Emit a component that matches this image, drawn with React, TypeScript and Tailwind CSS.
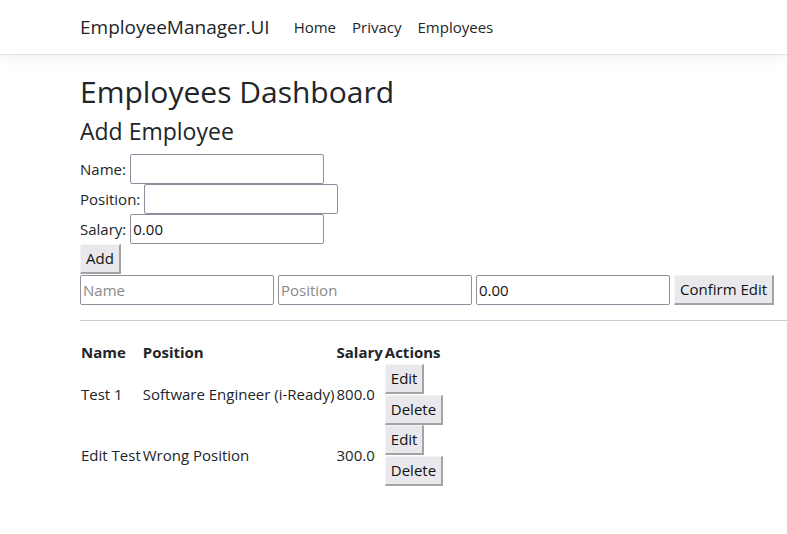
import React from 'react';

const employees = [
  { name: 'Test 1', position: 'Software Engineer (i-Ready)', salary: '800.0' },
  { name: 'Edit Test', position: 'Wrong Position', salary: '300.0' },
];

const btn =
  'bg-[#e9e9ed] border border-t-[#f4f4f4] border-l-[#f4f4f4] border-r-2 border-b-2 border-r-[#a3a3a3] border-b-[#a3a3a3] px-[5px] h-[30px] leading-none text-[15px] text-[#111]';
const input =
  'h-[30px] w-[194px] border border-[#8f8f9d] rounded-[2px] px-[2px] text-[15px] text-[#111] placeholder:text-[#8a8a8a] outline-none';

export default function App() {
  return (
    <div className="min-h-screen bg-white text-[#212529] font-['Open_Sans',sans-serif]">
      <header className="h-[55px] border-b border-[#dee2e6] shadow-[0_4px_12px_rgba(0,0,0,0.05)] flex items-center pl-[80px]">
        <span className="text-[19px] mr-[24px]">EmployeeManager.UI</span>
        <nav className="flex gap-[16px] text-[15px]">
          <a>Home</a>
          <a>Privacy</a>
          <a>Employees</a>
        </nav>
      </header>

      <main className="pl-[80px] pt-[18px]">
        <h1 className="text-[30px] leading-[1.25]">Employees Dashboard</h1>
        <h2 className="text-[23px] leading-[1.2] mt-[7px] mb-[9px]">Add Employee</h2>

        <div className="flex flex-col text-[15px]">
          <div className="flex items-center gap-[4px]">
            <label>Name:</label>
            <input className={input} />
          </div>
          <div className="flex items-center gap-[4px]">
            <label>Position:</label>
            <input className={input} />
          </div>
          <div className="flex items-center gap-[4px]">
            <label>Salary:</label>
            <input className={input} defaultValue="0.00" />
          </div>
          <div>
            <button className={btn}>Add</button>
          </div>
          <div className="flex gap-[4px] mt-px">
            <input className={input} placeholder="Name" />
            <input className={input} placeholder="Position" />
            <input className={input} defaultValue="0.00" />
            <button className={btn}>Confirm Edit</button>
          </div>
        </div>

        <hr className="mt-[15px] mb-[20px] border-[#ccc]" />

        <table className="text-[15px]">
          <thead>
            <tr className="text-left">
              <th className="font-bold px-px">Name</th>
              <th className="font-bold px-px">Position</th>
              <th className="font-bold px-px">Salary</th>
              <th className="font-bold px-px">Actions</th>
            </tr>
          </thead>
          <tbody>
            {employees.map((e) => (
              <tr key={e.name}>
                <td className="px-px">{e.name}</td>
                <td className="px-px">{e.position}</td>
                <td className="px-px">{e.salary}</td>
                <td className="px-px">
                  <div className="flex flex-col items-start gap-px">
                    <button className={btn}>Edit</button>
                    <button className={btn}>Delete</button>
                  </div>
                </td>
              </tr>
            ))}
          </tbody>
        </table>
      </main>
    </div>
  );
}
